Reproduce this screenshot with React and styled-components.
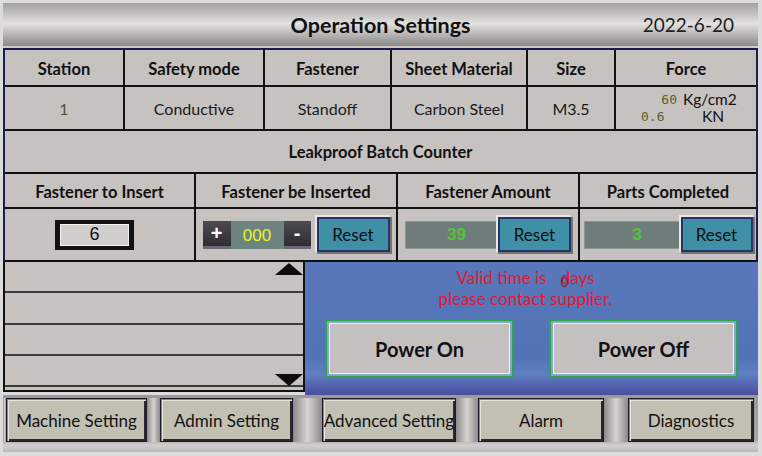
import React from "react";
import styled, { createGlobalStyle } from "styled-components";

const GlobalStyle = createGlobalStyle`
  body {
    margin: 0;
    background: #dcdcdc;
  }
`;

const info = {
  heads: ["Station", "Safety mode", "Fastener", "Sheet Material", "Size", "Force"],
  values: ["1", "Conductive", "Standoff", "Carbon Steel", "M3.5"],
};

const navItems = [
  { label: "Machine Setting", w: 141, gap: 13 },
  { label: "Admin Setting", w: 133, gap: 29 },
  { label: "Advanced Setting", w: 134, gap: 22 },
  { label: "Alarm", w: 126, gap: 24 },
  { label: "Diagnostics", w: 126, gap: 0 },
];

const App = () => {
  return (
    <>
      <GlobalStyle />
      <Screen>
        <Header>
          <span />
          <Title>Operation Settings</Title>
          <DateLabel>2022-6-20</DateLabel>
        </Header>

        <Table>
          <InfoGrid>
            {info.heads.map((h, i) => (
              <HeadCell key={h} $last={i === 5}>
                {h}
              </HeadCell>
            ))}
            {info.values.map((v, i) => (
              <Cell key={`v${i}`} $color={i === 0 ? "#4d5528" : "#1a1a1a"}>
                {v}
              </Cell>
            ))}
            <Cell $last>
              <ForceGrid>
                <ForceNum $right>60</ForceNum>
                <ForceUnit>Kg/cm2</ForceUnit>
                <ForceNum>0.6</ForceNum>
                <ForceUnit $center>KN</ForceUnit>
              </ForceGrid>
            </Cell>
          </InfoGrid>

          <Banner>Leakproof Batch Counter</Banner>

          <CounterGrid>
            <HeadCell>Fastener to Insert</HeadCell>
            <HeadCell>Fastener be Inserted</HeadCell>
            <HeadCell>Fastener Amount</HeadCell>
            <HeadCell $last>Parts Completed</HeadCell>

            <Cell $padRight={10}>
              <ValueBox>6</ValueBox>
            </Cell>
            <Cell>
              <Stepper>
                <StepButton $w={28}>+</StepButton>
                <StepValue>000</StepValue>
                <StepButton $w={27}>-</StepButton>
              </Stepper>
              <ResetButton $ml={6}>Reset</ResetButton>
            </Cell>
            <Cell>
              <Display $w={93}>39</Display>
              <ResetButton>Reset</ResetButton>
            </Cell>
            <Cell $last>
              <Display $w={97}>3</Display>
              <ResetButton $w={72}>Reset</ResetButton>
            </Cell>
          </CounterGrid>
        </Table>

        <Lower>
          <ListPanel>
            <ListRow />
            <ListRow />
            <ListRow />
            <ListRow />
            <ArrowUp />
            <ArrowDown />
          </ListPanel>

          <PowerPanel>
            <Message>
              <div>
                Valid time is <DaysNum>0</DaysNum>days
              </div>
              <div>please contact supplier.</div>
            </Message>
            <PowerRow>
              <PowerButton>Power On</PowerButton>
              <PowerButton>Power Off</PowerButton>
            </PowerRow>
          </PowerPanel>
        </Lower>

        <NavBar>
          <NavGap $w={3} />
          {navItems.map((n) => (
            <React.Fragment key={n.label}>
              <NavButton $w={n.w}>{n.label}</NavButton>
              {n.gap > 0 && <NavGap $w={n.gap} />}
            </React.Fragment>
          ))}
        </NavBar>
      </Screen>
    </>
  );
};

export default App;

const Screen = styled.div`
  width: 762px;
  height: 456px;
  box-sizing: border-box;
  padding: 3px 4px 4px 3px;
  background: #dcdcdc;
  display: flex;
  flex-direction: column;
  font-family: Lato, "Open Sans", sans-serif;
  color: #111;
`;

const Header = styled.div`
  height: 45px;
  box-sizing: border-box;
  border-bottom: 2px solid #cfcdc6;
  background: linear-gradient(
    to bottom,
    #a3a19f 0%,
    #c3c1bf 25%,
    #e3e2e0 48%,
    #bdbbb9 70%,
    #8b8987 100%
  );
  display: grid;
  grid-template-columns: 1fr auto 1fr;
  align-items: center;
`;

const Title = styled.div`
  font-size: 21.5px;
  font-weight: 700;
  color: #111;
`;

const DateLabel = styled.div`
  justify-self: end;
  padding-right: 24px;
  font-size: 19px;
  color: #1c1c1c;
`;

const Table = styled.div`
  border: 2px solid #1c1d4e;
  border-bottom: none;
  background: #c6c2c0;
`;

const InfoGrid = styled.div`
  display: grid;
  grid-template-columns: 120px 140px 127px 136px 88px 140px;
  grid-template-rows: 37px 44px;
`;

const Cell = styled.div`
  box-sizing: border-box;
  display: flex;
  align-items: center;
  justify-content: center;
  border-right: ${(p) => (p.$last ? "none" : "2px solid #111")};
  border-bottom: 2px solid #111;
  padding-right: ${(p) => p.$padRight || 0}px;
  font-size: 16px;
  color: ${(p) => p.$color || "#1a1a1a"};
  white-space: nowrap;
`;

const HeadCell = styled(Cell)`
  font-weight: 700;
  font-size: 16.5px;
  padding-top: 2px;
  color: #111;
`;

const ForceGrid = styled.div`
  display: grid;
  grid-template-columns: 36px 60px;
  column-gap: 6px;
  margin-left: 12px;
  line-height: 17px;
`;

const ForceNum = styled.span`
  font-family: "DejaVu Sans Mono", "Liberation Mono", monospace;
  font-size: 13px;
  color: #5e5c2c;
  text-align: ${(p) => (p.$right ? "right" : "left")};
  align-self: end;
`;

const ForceUnit = styled.span`
  font-size: 15.5px;
  color: #111;
  text-align: ${(p) => (p.$center ? "center" : "left")};
`;

const Banner = styled.div`
  height: 43px;
  box-sizing: border-box;
  border-bottom: 2px solid #111;
  display: flex;
  align-items: center;
  justify-content: center;
  font-size: 16.5px;
  font-weight: 700;
`;

const CounterGrid = styled.div`
  display: grid;
  grid-template-columns: 191px 202px 182px 176px;
  grid-template-rows: 35px 53px;
`;

const ValueBox = styled.div`
  width: 79px;
  height: 30px;
  box-sizing: border-box;
  border: 4px solid #121212;
  border-left-width: 5px;
  border-right-width: 5px;
  background: #d1cfcd;
  box-shadow: inset 0 0 0 1px #f2f2f2;
  display: flex;
  align-items: center;
  justify-content: center;
  font-family: "Liberation Sans", Arial, sans-serif;
  font-size: 18px;
  color: #111;
`;

const Stepper = styled.div`
  display: flex;
  height: 28px;
`;

const StepButton = styled.div`
  width: ${(p) => p.$w}px;
  box-sizing: border-box;
  background: linear-gradient(to bottom, #4d4a52, #2f2c34);
  border-bottom: 3px solid #6c6972;
  display: flex;
  align-items: center;
  justify-content: center;
  color: #fff;
  font-family: "Liberation Sans", Arial, sans-serif;
  font-size: 20px;
  font-weight: 700;
`;

const StepValue = styled.div`
  width: 53px;
  background: #6d837f;
  display: flex;
  align-items: center;
  justify-content: center;
  padding-top: 2px;
  color: #eef21e;
  font-family: "Liberation Sans", Arial, sans-serif;
  font-size: 17px;
`;

const ResetButton = styled.div`
  width: ${(p) => p.$w || 73}px;
  height: 35px;
  margin-left: ${(p) => p.$ml || 0}px;
  box-sizing: border-box;
  background: #3f8fa6;
  border: 2px solid #23336c;
  box-shadow: -1px -1px 0 1px #ebe7db, 1px 1px 0 1px #77736a;
  display: flex;
  align-items: center;
  justify-content: center;
  font-size: 17px;
  color: #111;
`;

const Display = styled.div`
  width: ${(p) => p.$w}px;
  height: 28px;
  box-sizing: border-box;
  padding-left: 10px;
  background: #6f7d7a;
  border: 1px solid #8d9896;
  display: flex;
  align-items: center;
  justify-content: center;
  color: #54c43c;
  font-family: "Liberation Sans", Arial, sans-serif;
  font-size: 17px;
  font-weight: 700;
`;

const Lower = styled.div`
  height: 133px;
  display: flex;
`;

const ListPanel = styled.div`
  position: relative;
  width: 302px;
  height: 130px;
  box-sizing: border-box;
  border: 2px solid #111;
  border-top: none;
  padding-bottom: 3px;
  background: #c6c2c0;
  display: flex;
  flex-direction: column;
`;

const ListRow = styled.div`
  flex: 1;
  border-bottom: 2px solid #3a3a3a;
`;

const ArrowUp = styled.div`
  position: absolute;
  right: 0;
  top: 1px;
  width: 0;
  height: 0;
  border-left: 14px solid transparent;
  border-right: 14px solid transparent;
  border-bottom: 12px solid #0c0c0c;
`;

const ArrowDown = styled.div`
  position: absolute;
  right: 0;
  bottom: 4px;
  width: 0;
  height: 0;
  border-left: 14px solid transparent;
  border-right: 14px solid transparent;
  border-top: 12px solid #0c0c0c;
`;

const PowerPanel = styled.div`
  flex: 1;
  background: linear-gradient(
    to bottom,
    #5878bb 0%,
    #5373b7 72%,
    #6080c2 84%,
    #4d5aa8 96%,
    #494e9e 100%
  );
  display: flex;
  flex-direction: column;
  padding-top: 6px;
`;

const Message = styled.div`
  text-align: center;
  color: #e5162c;
  font-size: 17px;
  line-height: 20px;
  padding-right: 12px;
`;

const DaysNum = styled.span`
  display: inline-block;
  width: 0;
  margin-left: 10px;
  font-size: 13px;
  color: #8c1a2a;
  transform: translateY(3px);
`;

const PowerRow = styled.div`
  display: flex;
  gap: 35px;
  padding: 0 20px;
  margin-top: 10px;
`;

const PowerButton = styled.div`
  width: 189px;
  height: 59px;
  box-sizing: border-box;
  border: 2px solid #33a04a;
  background: #c4c0bf;
  box-shadow: inset 0 0 0 2px #86a5cc, inset 0 0 0 3px #f4f4f4;
  display: flex;
  align-items: center;
  justify-content: center;
  font-size: 20px;
  font-weight: 700;
  color: #111;
`;

const NavBar = styled.div`
  height: 57px;
  box-sizing: border-box;
  padding-top: 3px;
  display: flex;
  align-items: flex-start;
  background: linear-gradient(
    to bottom,
    #9c9a98 0%,
    #a8a6a4 78%,
    #d2d0ce 88%,
    #bcbab8 100%
  );
`;

const NavGap = styled.div`
  width: ${(p) => p.$w}px;
  height: 44px;
  background: linear-gradient(to right, #8c8a88, #d6d4d2 50%, #8c8a88);
`;

const NavButton = styled.div`
  width: ${(p) => p.$w}px;
  height: 44px;
  box-sizing: border-box;
  background: #c2bfb3;
  border: 1px solid #1e1a2a;
  box-shadow: inset 1px 1px 0 #8a78c0, inset 2px 2px 0 #e6e4dc,
    inset -2px -2px 0 #2a2632;
  display: flex;
  align-items: center;
  justify-content: center;
  font-size: 17px;
  color: #111;
  white-space: nowrap;
`;
